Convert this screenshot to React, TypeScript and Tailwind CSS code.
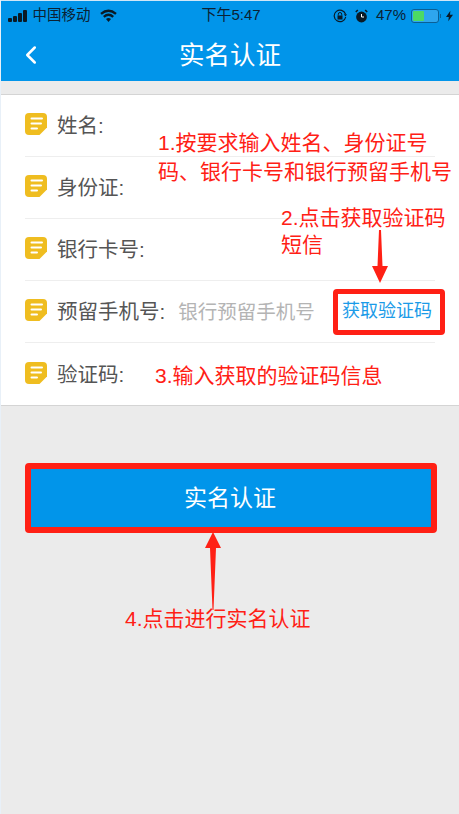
import { ChevronLeft } from "lucide-react";

const font = { cjk: "font-['Liberation_Sans','Noto_Sans_CJK_SC',sans-serif]" };

function NoteIcon() {
  return (
    <svg width="22" height="22" viewBox="0 0 22 22" className="shrink-0">
      <path d="M4 0H18Q22 0 22 4V14.500L14.500 22H4Q0 22 0 18V4Q0 0 4 0Z" fill="#efbd20" />
      <path d="M6.500 5.500H17M6.500 10.500H16M6.500 15.500H12" stroke="#fff" strokeWidth="2" strokeLinecap="round" />
    </svg>
  );
}

function Row({ label, children, last }: { label: string; children?: React.ReactNode; last?: boolean }) {
  return (
    <div className={`flex h-[62px] items-center ${last ? "" : "border-b border-[#eeeeee]"}`}>
      <div className="mb-[3px]">
        <NoteIcon />
      </div>
      <span className="ml-[10px] mt-[2px] text-[20.500px] leading-none text-[#555555]">{label}</span>
      {children}
    </div>
  );
}

function StatusBar() {
  return (
    <div className="flex h-[29px] items-center pl-[7px] pr-[6px] text-[14.500px] text-[#0c2233]">
      <div className="flex w-[192px] items-center">
        <div className="flex items-end gap-[1.500px]">
          <span className="h-[4px] w-[3.500px] rounded-[1px] bg-[#0a1a26]" />
          <span className="h-[6px] w-[3.500px] rounded-[1px] bg-[#0a1a26]" />
          <span className="h-[9px] w-[3.500px] rounded-[1px] bg-[#0a1a26]" />
          <span className="h-[12px] w-[3.500px] rounded-[1px] bg-[#0a1a26]" />
        </div>
        <span className="ml-[6px]">中国移动</span>
        <svg width="17" height="13" viewBox="0 0 17 13" className="ml-[9px]">
          <path d="M1 4.800Q8.500 -1.500 16 4.800" fill="none" stroke="#0a1a26" strokeWidth="2.400" />
          <path d="M3.800 7.800Q8.500 3.800 13.200 7.800" fill="none" stroke="#0a1a26" strokeWidth="2.400" />
          <path d="M6 10Q8.500 8 11 10L8.500 13Z" fill="#0a1a26" />
        </svg>
      </div>
      <span className="w-[62px] whitespace-nowrap text-center text-[15px]">下午5:47</span>
      <div className="ml-auto flex items-center">
        <svg width="14" height="14" viewBox="0 0 14 14">
          <path d="M12.500 5A5.800 5.800 0 1 0 12.700 8" fill="none" stroke="#0a1a26" strokeWidth="1.200" />
          <path d="M10.800 5.200H14L12.500 7.500Z" fill="#0a1a26" />
          <rect x="4.500" y="6.500" width="5" height="4" fill="#0a1a26" />
          <path d="M5.300 6.500V5.200A1.700 1.700 0 0 1 8.700 5.200V6.500" fill="none" stroke="#0a1a26" strokeWidth="1" />
        </svg>
        <svg width="13" height="14" viewBox="0 0 13 14" className="ml-[8px]">
          <circle cx="6.500" cy="8" r="5.400" fill="#0a1a26" />
          <path d="M0.800 3L2.800 1M12.200 3L10.200 1" stroke="#0a1a26" strokeWidth="1.600" />
          <path d="M6.500 5V8H9" fill="none" stroke="#fff" strokeWidth="1" />
        </svg>
        <span className="ml-[8px] text-[15px]">47%</span>
        <div className="ml-[5px] flex h-[14px] w-[28px] items-center rounded-[3px] border border-[#0a5f95] bg-[#2ea6ee] p-[1px]">
          <div className="h-full w-[47%] rounded-[1px] bg-[#4cd964]" />
        </div>
        <span className="ml-[1px] h-[4px] w-[1px] bg-[#0a5f95]" />
        <svg width="7" height="12" viewBox="0 0 8 12" className="ml-[5px]">
          <path d="M5 0L0 7H3.200L2.600 12L8 4.600H4.600Z" fill="#0a1a26" />
        </svg>
      </div>
    </div>
  );
}

export default function App() {
  return (
    <div className={`relative h-[814px] w-[459px] overflow-hidden border-l border-[#e8f0f8] bg-[#ebebeb] ${font.cjk}`}>
      <div className="h-[81px] border-t border-[#cfe6f7] bg-[#0195ea]">
        <StatusBar />
        <div className="relative flex h-[50px] items-center justify-center">
          <ChevronLeft className="absolute left-[15px] top-[10px] h-[30px] w-[30px] text-white" strokeWidth={2} />
          <span className="text-[25.500px] text-white">实名认证</span>
        </div>
      </div>

      <div className="mt-[13px] border-y border-[#d4d4d4] bg-white pl-[24px] pr-[24px]">
        <Row label="姓名:" />
        <Row label="身份证:" />
        <Row label="银行卡号:" />
        <Row label="预留手机号:">
          <span className="ml-[13px] mt-[2px] text-[19.500px] leading-none text-[#b4b4b4]">银行预留手机号</span>
          <button className="ml-auto mr-[-10px] flex h-[46px] w-[112px] items-center justify-center rounded-[4px] border-[5px] border-[#ff2015] pr-[4px] text-[18px] whitespace-nowrap text-[#1b9be8]">
            获取验证码
          </button>
        </Row>
        <Row label="验证码:" last />
      </div>

      <div className="mt-[57px] pl-[24px]">
        <button className="flex h-[70px] w-[412px] items-center justify-center rounded-[4px] border-[6px] border-[#ff2015] bg-[#0195ea] pr-[2px] text-[23px] text-white">
          实名认证
        </button>
      </div>

      {/* annotations */}
      <div className="absolute left-[157px] top-[128px] whitespace-nowrap text-[21px] leading-[29px] text-[#ff2015]">
        <div>1.按要求输入姓名、身份证号</div>
        <div>码、银行卡号和银行预留手机号</div>
      </div>
      <div className="absolute left-[280px] top-[204px] whitespace-nowrap text-[21px] leading-[27px] text-[#ff2015]">
        <div>2.点击获取验证码</div>
        <div>短信</div>
      </div>
      <div className="absolute left-[154px] top-[361px] whitespace-nowrap text-[21px] leading-[29px] text-[#ff2015]">
        3.输入获取的验证码信息
      </div>
      <div className="absolute left-[124px] top-[604px] whitespace-nowrap text-[21px] leading-[29px] text-[#ff2015]">
        4.点击进行实名认证
      </div>

      <svg width="20" height="54" viewBox="0 0 20 54" className="absolute left-[369px] top-[230px]">
        <path d="M9 0H11L12.500 36L18 36L10 53L2 36L7.500 36Z" fill="#ff2015" />
      </svg>
      <svg width="20" height="80" viewBox="0 0 20 80" className="absolute left-[202px] top-[532px]">
        <path d="M10 0L18 16H13L10.500 78H9.500L7 16H2Z" fill="#ff2015" />
      </svg>
    </div>
  );
}
